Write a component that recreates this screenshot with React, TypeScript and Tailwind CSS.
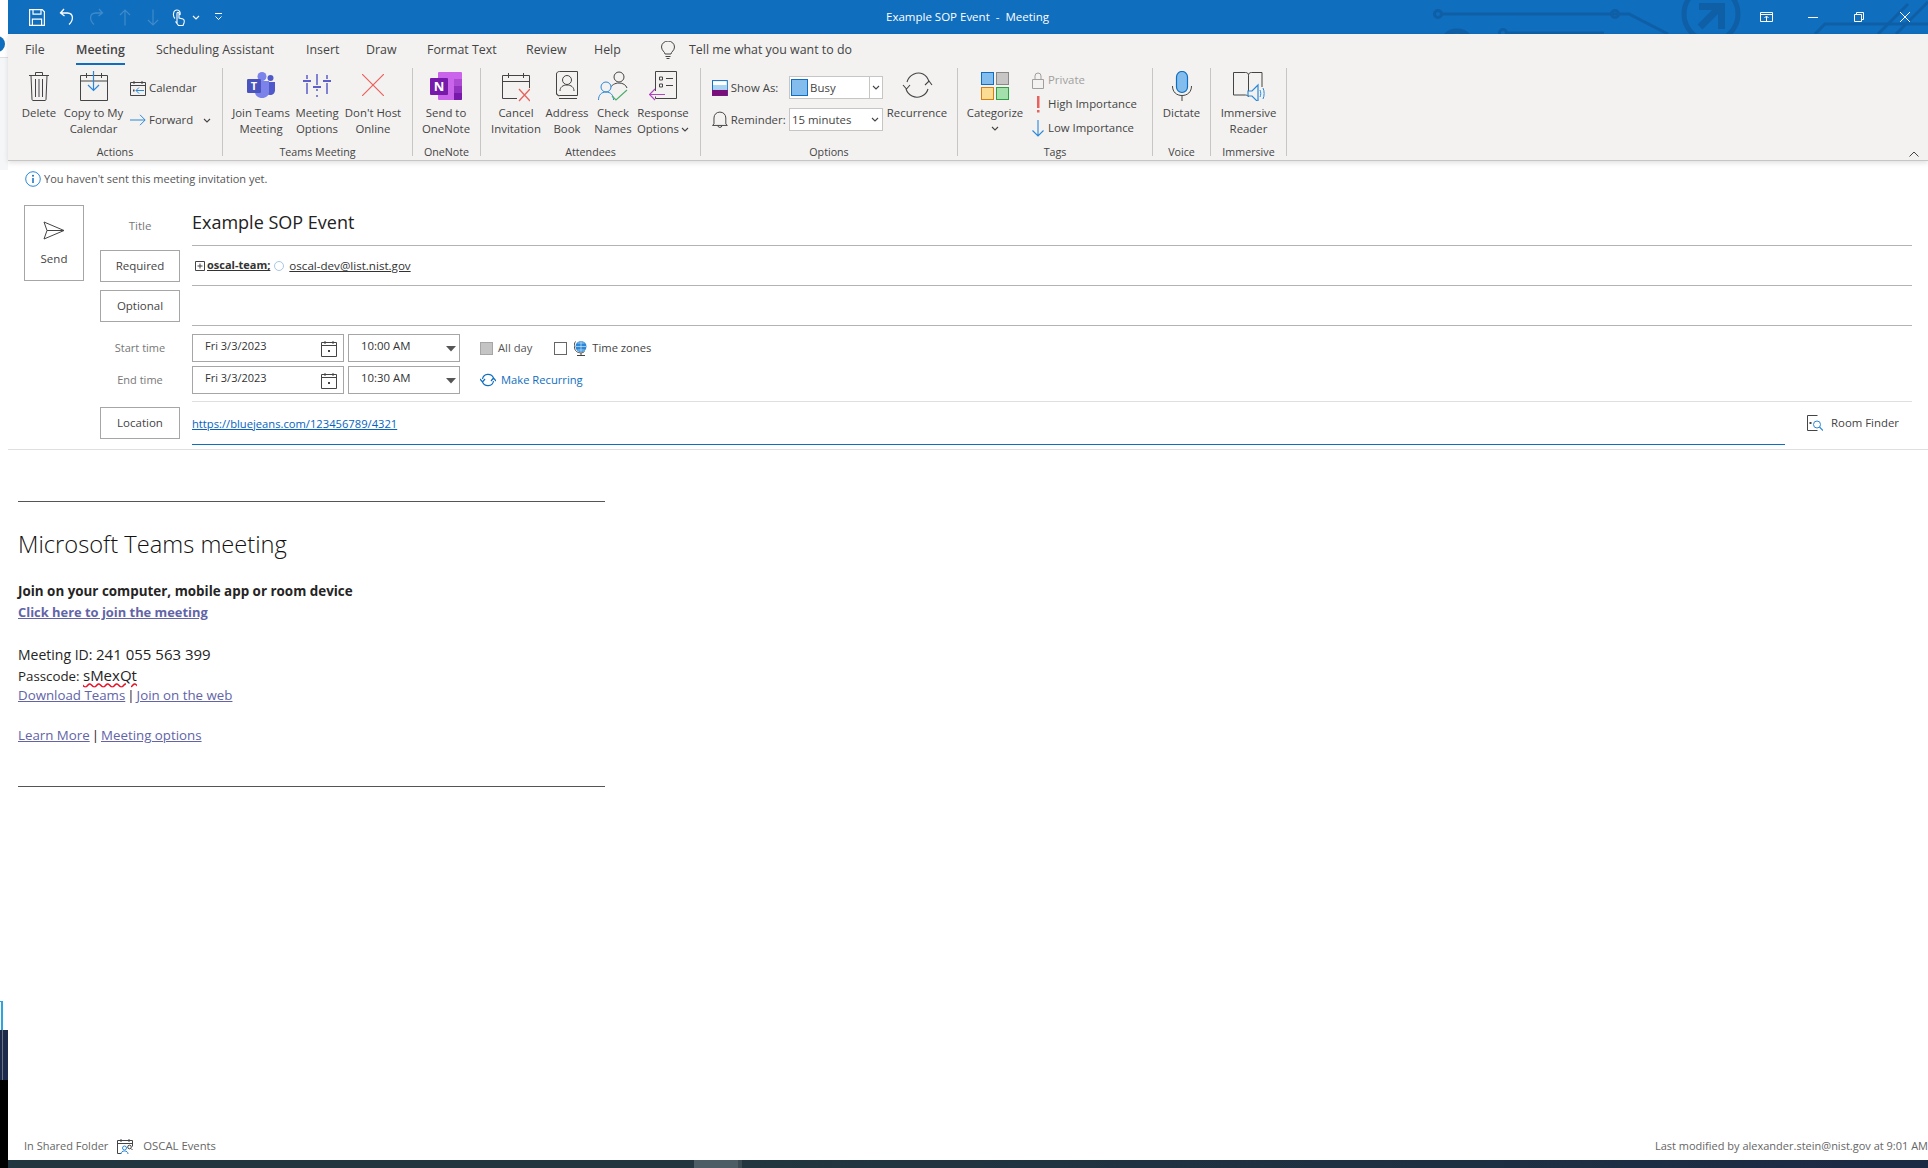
import type { ReactNode } from "react"

const ink = "#444444"

function Chevron({ className = "" }: { className?: string }) {
  return (
    <svg width="8" height="5" viewBox="0 0 8 5" className={className}>
      <path d="M1 1l3 3 3-3" fill="none" stroke={ink} strokeWidth="1.1" />
    </svg>
  )
}

function CircuitArt() {
  return (
    <svg width="500" height="34" viewBox="0 0 500 34" fill="none" stroke="#0f5fa6" className="absolute right-0 top-0">
      <path d="M14 14H201L240 34" strokeWidth="3" />
      <circle cx="10" cy="14" r="3.5" strokeWidth="3" />
      <circle cx="187" cy="14" r="3.5" strokeWidth="3" />
      <circle cx="29" cy="47" r="16" strokeWidth="5" />
      <path d="M79 33H176" strokeWidth="3" />
      <circle cx="75" cy="33" r="3.5" strokeWidth="3" />
      <circle cx="283" cy="14" r="27" strokeWidth="5" />
      <path d="M272 27L292 7" strokeWidth="7" />
      <path d="M271 3H297V29H290V10H271Z" fill="#0f5fa6" stroke="none" />
      <path d="M387 34L397 24H500" strokeWidth="3" />
      <path d="M450 34L480 4M468 34L500 2" strokeWidth="3" />
    </svg>
  )
}

function QuickAccess() {
  return (
    <div className="flex items-center pl-[21px]">
      <svg width="16" height="17" viewBox="0 0 16 17" fill="none" stroke="#fff" strokeWidth="1.2">
        <path d="M.6.6h12.6l2.2 2.2v13.6H.6zM4 .6v4.6h8V.6M3.4 16.4v-6.2h9.2v6.2" />
      </svg>
      <svg width="16" height="18" viewBox="0 0 16 18" fill="none" stroke="#fff" strokeWidth="1.3" className="ml-[14px]">
        <path d="M5 1L1.5 5 5.5 8M2 5h6.5c6 .5 6.5 6.500 1.500 11.500" />
      </svg>
      <svg width="16" height="18" viewBox="0 0 16 18" fill="none" stroke="#3f8acb" strokeWidth="1.3" className="ml-[13px]">
        <path d="M11 1l3.500 4L10.500 8M14 5H7.500C1.500 5.500 1 11.500 6 16.500" />
      </svg>
      <svg width="12" height="17" viewBox="0 0 12 17" fill="none" stroke="#3f8acb" strokeWidth="1.2" className="ml-[15px]">
        <path d="M6 16.500V1M1 6l5-5 5 5" />
      </svg>
      <svg width="12" height="17" viewBox="0 0 12 17" fill="none" stroke="#3f8acb" strokeWidth="1.2" className="ml-[16px]">
        <path d="M6 .5V16M1 11l5 5 5-5" />
      </svg>
      <svg width="13" height="17" viewBox="0 0 13 17" fill="none" stroke="#fff" strokeWidth="1.1" className="ml-[13px]">
        <path d="M3 9.500C.5 7 1 1 5 1c3 0 3.500 3 3 5M5 14.500V4.500c0-1.600 2-1.600 2 0v4.500l4 1c1.500.5 1.500 2 1 4l-1 2.500H6.500l-3-4" />
      </svg>
      <Chevron className="ml-[7px] [&_path]:stroke-white" />
      <svg width="9" height="8" viewBox="0 0 9 8" className="ml-[14px]">
        <path d="M1 .5h7" stroke="#fff" />
        <path d="M1.500 3.500l3 3 3-3" fill="none" stroke="#fff" />
      </svg>
    </div>
  )
}

function WindowButtons() {
  return (
    <div className="relative ml-auto flex items-center">
      <svg width="13" height="10" viewBox="0 0 13 10" fill="none" stroke="#fff" className="mr-[35px]">
        <path d="M.5.5h12v9H.5zM.5 2.500h12M6.500 9.500V4.500M4.500 6l2-2 2 2" />
      </svg>
      <span className="mr-[36px] h-px w-[10px] bg-white" />
      <svg width="10" height="10" viewBox="0 0 10 10" fill="none" stroke="#fff" className="mr-[36px]">
        <path d="M.5 2.500h7v7h-7zM2.500 2.500v-2h7v7h-2" />
      </svg>
      <svg width="10" height="10" viewBox="0 0 10 10" stroke="#fff" className="mr-[18px]">
        <path d="M0 0l10 10M10 0L0 10" />
      </svg>
    </div>
  )
}

const ICONS: Record<string, ReactNode> = {
  trash: (
    <svg width="22" height="30" viewBox="0 0 22 30" fill="none" stroke="#444" strokeWidth="1">
      <path d="M1 4.500h20M7.500 4V1.500h7V4M3 4.500l1 24c0 .6.500 1 1 1h12c.5 0 1-.4 1-1l1-24M7.500 8v18M11 8v18M14.500 8v18" />
    </svg>
  ),
  copyCal: (
    <svg width="28" height="30" viewBox="0 0 28 30" fill="none">
      <path d="M.5 4.500h27v25H.5zM.5 10h27M6.500 2v5M21.500 2v5" stroke="#444" />
      <path d="M13.500 0v19M8 14l5.500 5.500L19 14" stroke="#2b88d8" strokeWidth="1.200" />
    </svg>
  ),
  teams: (
    <svg width="28" height="26" viewBox="0 0 28 26" className="mt-px">
      <circle cx="15" cy="4.500" r="4.500" fill="#7b83eb" />
      <circle cx="23.500" cy="6" r="3" fill="#5059c9" />
      <path d="M19 10h9v8c0 3-2 5-5 5-2 0-3-1-4-2z" fill="#5059c9" />
      <path d="M8 9h14v11c0 3.500-3 6-7 6s-7-2.500-7-6z" fill="#7b83eb" />
      <rect x="0" y="7" width="14" height="14" rx="1.200" fill="#4b53bc" />
      <text x="7" y="18" textAnchor="middle" fontSize="11" fontWeight="700" fill="#fff" fontFamily="Open Sans">T</text>
    </svg>
  ),
  sliders: (
    <svg width="28" height="24" viewBox="0 0 28 24" fill="none" stroke="#5b5fc7" strokeWidth="1.500" className="mt-[2px]">
      <path d="M4 2v4M4 10v11M14 1v11M14 16v2M14 22v2M24 2v4M24 10v11" />
      <path d="M0 8h8M10 14h8M20 8h8" strokeWidth="2" />
    </svg>
  ),
  redX: (
    <svg width="22" height="22" viewBox="0 0 22 22" stroke="#e8625d" strokeWidth="1.200" className="mt-[3px]">
      <path d="M0 0l22 22M22 0L0 22" />
    </svg>
  ),
  oneNote: (
    <svg width="32" height="28" viewBox="0 0 32 28" className="mt-px">
      <rect x="8" y="0" width="24" height="28" rx="1" fill="#ca64ea" />
      <rect x="24" y="7" width="8" height="7" fill="#ae4bd5" />
      <rect x="24" y="14" width="8" height="7" fill="#9332bf" />
      <path d="M24 21h8v6a1 1 0 0 1-1 1h-7z" fill="#7719aa" />
      <rect x="0" y="6" width="18" height="17" rx="1" fill="#7719aa" />
      <text x="9" y="19" textAnchor="middle" fontSize="13" fontWeight="700" fill="#fff" fontFamily="Open Sans">N</text>
    </svg>
  ),
  cancelCal: (
    <svg width="28" height="30" viewBox="0 0 28 30" fill="none" className="mt-px">
      <path d="M.5 3.500h27v23H.5zM.5 9.500h27M6.500 1v5M21.500 1v5" stroke="#444" />
      <path d="M15 16h13v14H15z" fill="#f3f2f1" />
      <path d="M17 17l11 12M28 17L17 29" stroke="#e8625d" strokeWidth="1.300" />
    </svg>
  ),
  book: (
    <svg width="22" height="28" viewBox="0 0 22 28" fill="none" stroke="#444">
      <path d="M3.500.5h18v24h-18c-1.600 0-3-.9-3-2.500v-19c0-1.500 1.400-2.500 3-2.500zM.5 22c0 2 1.400 2.800 3 2.800M3 27.500h18" />
      <circle cx="11" cy="9" r="4.500" />
      <path d="M4 20c0-4 3-6 7-6s7 2 7 6" />
    </svg>
  ),
  check: (
    <svg width="30" height="30" viewBox="0 0 30 30" fill="none">
      <circle cx="21" cy="6" r="5" stroke="#444" />
      <path d="M12 18c1-4 5-6 9-6s7 2 8 5" stroke="#444" />
      <circle cx="8" cy="16" r="5" fill="#f3f2f1" stroke="#2b88d8" />
      <path d="M0.500 29c0-5 3-8 7.500-8s7.500 3 7.500 8" stroke="#2b88d8" />
      <path d="M14 25l4 4 11-10" stroke="#4caf6a" strokeWidth="1.200" />
    </svg>
  ),
  response: (
    <svg width="28" height="30" viewBox="0 0 28 30" fill="none">
      <path d="M6.500 20V.5h21v27h-21v-2" stroke="#444" />
      <path d="M10.500 6h3v3h-3zM10.500 13h3v3h-3zM17 7.500h7M17 14.500h7" stroke="#444" />
      <path d="M0 23.500h16M6 18l-5.500 5.500L6 29" stroke="#b146c2" strokeWidth="1.200" />
    </svg>
  ),
  recurrence: (
    <svg width="31" height="28" viewBox="0 0 31 28" fill="none" stroke="#444" strokeWidth="1.100">
      <path d="M5 11C7 4 15 0 21 3c3 1.500 5 4 6 8M26 18c-2 7-10 10-16 7-3-1.500-5-4-6-7" />
      <path d="M1 14l3.500 4 3.500-4M23 14l4-4 3 4" />
    </svg>
  ),
  cats: (
    <svg width="28" height="28" viewBox="0 0 28 28" className="mt-px">
      <rect x=".5" y=".5" width="12" height="12" fill="#83bdee" stroke="#106ebe" />
      <rect x="15.500" y=".5" width="12" height="12" fill="#c8c6c4" stroke="#8a8886" />
      <rect x=".5" y="15.500" width="12" height="12" fill="#fbdc93" stroke="#d67f0e" />
      <rect x="15.500" y="15.500" width="12" height="12" fill="#a4e0ac" stroke="#2f9e44" />
    </svg>
  ),
  mic: (
    <svg width="20" height="30" viewBox="0 0 20 30" fill="none">
      <rect x="4.500" y=".5" width="11" height="21" rx="5.500" fill="#83bdee" stroke="#106ebe" strokeWidth="1.200" />
      <path d="M.5 15c0 6 4 9.500 9.500 9.500S19.500 21 19.500 15" stroke="#444" />
      <path d="M10 24.500V30" stroke="#444" />
    </svg>
  ),
  reader: (
    <svg width="32" height="30" viewBox="0 0 32 30" fill="none">
      <path d="M.5 1.500h12c2 0 3 1 3 3v21c-1-1-2-1.500-3-1.500H.5zM15.500 4.500c0-2 1-3 3-3H29V16" stroke="#444" />
      <path d="M15 20h4l6-6v17l-6-6h-4z" fill="#f3f2f1" stroke="#2b88d8" strokeWidth="1.200" />
      <path d="M27 19c1 2 1 5 0 7M30 17c1.500 3 1.500 8 0 11" stroke="#2b88d8" />
    </svg>
  ),
}

function LargeButton({ icon, className, children }: { icon: string; className: string; children: ReactNode }) {
  return (
    <div className={`flex shrink-0 flex-col items-center text-center leading-[16px] ${className}`}>
      <div className="flex h-[37px] items-start justify-center pt-[3px]">{ICONS[icon]}</div>
      {children}
    </div>
  )
}

function Group({
  label,
  className,
  rowClassName = "",
  children,
}: {
  label: string
  className: string
  rowClassName?: string
  children: ReactNode
}) {
  return (
    <div className={`flex h-[88px] shrink-0 flex-col border-r border-[#c8c6c4] ${className}`}>
      <div className={`flex h-[76px] shrink-0 ${rowClassName}`}>{children}</div>
      <div className="text-center text-[10.700px] leading-[16px]">{label}</div>
    </div>
  )
}

function Ribbon() {
  return (
    <div className="relative h-[127px] shrink-0 border-b border-[#c8c6c4] bg-[#f3f2f1] text-[11.400px] text-[#444444] shadow-[0_2px_5px_rgba(0,0,0,0.12)]">
      <div className="mb-[2px] flex h-[32px] items-center pl-[17px] text-[12.400px]">
        <span className="w-[51px]">File</span>
        <span className="w-[80px]">
          <span className="relative font-semibold">
            Meeting
            <span className="absolute -bottom-[7px] left-0 h-[2px] w-full bg-[#106ebe]" />
          </span>
        </span>
        <span className="w-[150px]">Scheduling Assistant</span>
        <span className="w-[60px]">Insert</span>
        <span className="w-[61px]">Draw</span>
        <span className="w-[99px]">Format Text</span>
        <span className="w-[68px]">Review</span>
        <span className="w-[67px]">Help</span>
        <span className="flex items-center gap-[14px]">
          <svg width="14" height="18" viewBox="0 0 14 18" fill="none" stroke="#444">
            <path d="M4 13c0-2-3.500-3.500-3.500-7a6.500 6 0 0 1 13 0c0 3.500-3.500 5-3.500 7zM4.500 15.500h5M5.500 17.500h3" />
          </svg>
          Tell me what you want to do
        </span>
      </div>
      <div className="flex">
        <Group label="Actions" className="w-[215px]" rowClassName="pl-[11px]">
          <LargeButton icon="trash" className="w-[40px]">Delete</LargeButton>
          <LargeButton icon="copyCal" className="w-[69px]">
            <span>Copy to My</span>
            <span>Calendar</span>
          </LargeButton>
          <div className="ml-[2px] flex flex-col pt-[9px]">
            <div className="flex h-[22px] items-center gap-[3px]">
              <svg width="16" height="16" viewBox="0 0 16 16" fill="none">
                <path d="M.5 2.500h15v13H.5zM.5 5.500h15M4 1v3M12 1v3" stroke="#444" />
                <path d="M14 10.500H6M9 7.500l-3 3 3 3" stroke="#2b88d8" />
                <path d="M3 9.500h1.500v2H3z" fill="#444" />
              </svg>
              Calendar
            </div>
            <div className="mt-[10px] flex h-[22px] items-center gap-[3px]">
              <svg width="16" height="12" viewBox="0 0 16 12" fill="none" stroke="#2b88d8">
                <path d="M0 6h15M10 .8L15.200 6 10 11.200" />
              </svg>
              Forward
              <Chevron className="ml-[7px]" />
            </div>
          </div>
        </Group>
        <Group label="Teams Meeting" className="w-[190px]" rowClassName="pl-[4px]">
          <LargeButton icon="teams" className="w-[68px]">
            <span>Join Teams</span>
            <span>Meeting</span>
          </LargeButton>
          <LargeButton icon="sliders" className="w-[44px]">
            <span>Meeting</span>
            <span>Options</span>
          </LargeButton>
          <LargeButton icon="redX" className="w-[68px]">
            <span>Don't Host</span>
            <span>Online</span>
          </LargeButton>
        </Group>
        <Group label="OneNote" className="w-[68px]">
          <LargeButton icon="oneNote" className="w-[66px]">
            <span>Send to</span>
            <span>OneNote</span>
          </LargeButton>
        </Group>
        <Group label="Attendees" className="w-[220px]" rowClassName="pl-[7px]">
          <LargeButton icon="cancelCal" className="w-[56px]">
            <span>Cancel</span>
            <span>Invitation</span>
          </LargeButton>
          <LargeButton icon="book" className="w-[46px]">
            <span>Address</span>
            <span>Book</span>
          </LargeButton>
          <LargeButton icon="check" className="w-[46px]">
            <span>Check</span>
            <span>Names</span>
          </LargeButton>
          <LargeButton icon="response" className="w-[54px]">
            <span>Response</span>
            <span className="flex items-center gap-[2px]">Options <Chevron /></span>
          </LargeButton>
        </Group>
        <Group label="Options" className="w-[257px]" rowClassName="pl-[11px]">
          <div className="flex w-[171px] shrink-0 flex-col gap-[9px] pt-[8px]">
            <div className="flex h-[23px] items-center">
              <svg width="16" height="16" viewBox="0 0 16 16">
                <rect x=".5" y=".5" width="15" height="15" fill="#fff" stroke="#106ebe" />
                <rect x="1" y="5" width="14" height="5" fill="#a9d3f2" />
                <rect y="10" width="16" height="6" fill="#7a0f7a" />
              </svg>
              <span className="ml-[3px] w-[59px]">Show As:</span>
              <div className="flex h-[23px] w-[95px] items-center border border-[#c8c6c4] bg-white pl-[1px]">
                <span className="h-[17px] w-[17px] border border-[#106ebe] bg-[#83bdee]" />
                <span className="ml-[2px] flex-1">Busy</span>
                <span className="flex h-full w-[13px] items-center justify-center border-l border-[#c8c6c4]"><Chevron /></span>
              </div>
            </div>
            <div className="flex h-[23px] items-center">
              <svg width="16" height="17" viewBox="0 0 16 17" fill="none" stroke="#444">
                <path d="M2 13V7c0-3.500 2.500-6 6-6s6 2.500 6 6v6l1.500 1.500H.5zM6 15c0 2 4 2 4 0" />
              </svg>
              <span className="ml-[3px] w-[59px]">Reminder:</span>
              <div className="flex h-[23px] w-[95px] items-center justify-between border border-[#c8c6c4] bg-white pl-[2px] pr-[3px]">
                15 minutes
                <Chevron />
              </div>
            </div>
          </div>
          <LargeButton icon="recurrence" className="w-[68px]">Recurrence</LargeButton>
        </Group>
        <Group label="Tags" className="w-[195px]" rowClassName="pl-[7px]">
          <LargeButton icon="cats" className="w-[60px]">
            <span>Categorize</span>
            <Chevron className="mt-[5px]" />
          </LargeButton>
          <div className="ml-[5px] flex flex-col">
            <div className="flex h-[24px] items-center gap-[2px] text-[#a19f9d]">
              <svg width="16" height="17" viewBox="0 0 12 17" fill="none" stroke="#a19f9d">
                <path d="M.5 7.500h11v9H.5zM3 7.500V4a3 3 0 0 1 6 0v3.500" />
              </svg>
              Private
            </div>
            <div className="flex h-[24px] items-center gap-[2px]">
              <svg width="16" height="17" viewBox="0 0 16 17">
                <rect x="7" y="0" width="2.500" height="12" fill="#e8625d" />
                <rect x="7" y="14" width="2.500" height="2.500" fill="#e8625d" />
              </svg>
              High Importance
            </div>
            <div className="flex h-[24px] items-center gap-[2px]">
              <svg width="16" height="17" viewBox="0 0 16 17" fill="none" stroke="#2b88d8" strokeWidth="1.100">
                <path d="M8 0v16M2.500 10.500L8 16l5.500-5.500" />
              </svg>
              Low Importance
            </div>
          </div>
        </Group>
        <Group label="Voice" className="w-[58px]">
          <LargeButton icon="mic" className="w-[57px]">Dictate</LargeButton>
        </Group>
        <Group label="Immersive" className="w-[76px]">
          <LargeButton icon="reader" className="w-[75px]">
            <span>Immersive</span>
            <span>Reader</span>
          </LargeButton>
        </Group>
      </div>
      <svg width="10" height="6" viewBox="0 0 10 6" fill="none" stroke="#444" className="absolute bottom-[3px] right-[9px]">
        <path d="M.5 5.500L5 1l4.500 4.500" />
      </svg>
    </div>
  )
}

function BoxButton({ children }: { children: ReactNode }) {
  return (
    <div className="flex h-[32px] w-[80px] shrink-0 items-center justify-center border border-[#a6a6a6] text-[11.500px] text-[#444444]">
      {children}
    </div>
  )
}

function DateRow({ label, time, children }: { label: string; time: string; children: ReactNode }) {
  return (
    <div className="flex h-[28px] items-center text-[11.200px]">
      <div className="w-[80px] text-center text-[11px] text-[#777777]">{label}</div>
      <div className="ml-[12px] flex h-[28px] w-[152px] items-start border border-[#a6a6a6] pl-[12px] pt-[3px] text-[11px] text-[#333333]">
        Fri 3/3/2023
        <svg width="16" height="16" viewBox="0 0 16 16" fill="none" stroke="#444" className="ml-auto mr-[6px] mt-[3px]">
          <path d="M.5 1.500h15v14H.5zM.5 4.500h15M4 0v3M12 0v3" />
          <rect x="7" y="9" width="2" height="2" fill="#444" stroke="none" />
        </svg>
      </div>
      <div className="ml-[4px] flex h-[28px] w-[112px] items-start border border-[#a6a6a6] pl-[12px] pt-[2px] text-[11.400px] text-[#333333]">
        {time}
        <svg width="10" height="6" viewBox="0 0 10 6" className="ml-auto mr-[3px] mt-[9px]">
          <path d="M0 0h10L5 5.500z" fill="#555" />
        </svg>
      </div>
      {children}
    </div>
  )
}

function MeetingForm() {
  return (
    <div className="shrink-0 border-b border-[#e1dfdd]">
      <div className="flex h-[44px] items-start pl-[17px] pt-[10px] text-[11px] text-[#555555]">
        <svg width="16" height="16" viewBox="0 0 16 16" fill="none">
          <circle cx="8" cy="8" r="7.300" stroke="#2b88d8" />
          <path d="M8 7v5" stroke="#106ebe" strokeWidth="1.500" />
          <circle cx="8" cy="4.700" r="1" fill="#106ebe" />
        </svg>
        <span className="ml-[3px]">You haven't sent this meeting invitation yet.</span>
      </div>
      <div className="flex pb-[4px] pl-[16px]">
        <div className="flex h-[76px] w-[60px] shrink-0 flex-col items-center border border-[#a6a6a6] pt-[15px] text-[11.500px] text-[#444444]">
          <svg width="22" height="19" viewBox="0 0 22 19" fill="none" stroke="#444">
            <path d="M1 1l20 8.500L1 18l3-8.500zM4 9.500h17" />
          </svg>
          <span className="mt-[10px]">Send</span>
        </div>
        <div className="ml-[16px] flex flex-col">
          <div className="flex h-[41px] items-center">
            <div className="w-[80px] text-center text-[11.500px] text-[#777777]">Title</div>
            <div className="ml-[12px] flex h-full w-[1720px] items-center border-b border-[#b3b3b3] pb-[6px] text-[18px] text-[#222222]">
              Example SOP Event
            </div>
          </div>
          <div className="flex h-[40px] items-center">
            <BoxButton>Required</BoxButton>
            <div className="ml-[12px] flex h-full w-[1720px] items-center border-b border-[#b3b3b3] pl-[3px] text-[11.600px] text-[#333333]">
              <svg width="10" height="10" viewBox="0 0 10 10" fill="none" stroke="#444">
                <path d="M.5.5h9v9h-9zM5 2.500v5M2.500 5h5" />
              </svg>
              <span className="ml-[2px] text-[11px] font-bold underline">oscal-team;</span>
              <span className="ml-[4px] h-[10px] w-[10px] rounded-full border border-[#a9c7e2]" />
              <span className="ml-[5px] underline">oscal-dev@list.nist.gov</span>
            </div>
          </div>
          <div className="flex h-[40px] items-center">
            <BoxButton>Optional</BoxButton>
            <div className="ml-[12px] h-full w-[1720px] border-b border-[#b3b3b3]" />
          </div>
          <div className="mt-[8px] flex flex-col gap-[4px]">
            <DateRow label="Start time" time="10:00 AM">
              <span className="ml-[20px] h-[13px] w-[13px] border border-[#a6a6a6] bg-[#c4c4c4]" />
              <span className="ml-[5px] text-[#555555]">All day</span>
              <span className="ml-[22px] h-[13px] w-[13px] border border-[#666666]" />
              <svg width="13" height="16" viewBox="0 0 13 16" className="ml-[7px]">
                <circle cx="7" cy="6.500" r="5.500" fill="#2b88d8" />
                <path d="M2 6.500h10M7 1v11M3.500 3h7M3.500 10h7" stroke="#cfe6f8" strokeWidth=".7" />
                <path d="M1.500 1.500c-2 3-1.500 8 1 10 2 1.500 6 2 8 0M3 15.500h8M7 13v2.500" stroke="#444" fill="none" />
              </svg>
              <span className="ml-[5px] text-[#444444]">Time zones</span>
            </DateRow>
            <DateRow label="End time" time="10:30 AM">
              <svg width="16" height="14" viewBox="0 0 16 14" fill="none" stroke="#106ebe" strokeWidth="1.200" className="ml-[20px]">
                <path d="M2.500 6c1-6 9-6 11-1M13.500 8c-1 6-9 6-11 1M0 6l2.500 3L5 6M11 8l2.500-3L16 8" />
              </svg>
              <span className="ml-[5px] text-[#106ebe]">Make Recurring</span>
            </DateRow>
          </div>
          <div className="ml-[92px] mt-[7px] w-[1720px] border-t border-[#e1dfdd]" />
          <div className="flex h-[43px] items-start">
            <div className="mt-[5px]">
              <BoxButton>Location</BoxButton>
            </div>
            <div className="ml-[12px] flex h-full w-[1593px] items-center border-b border-[#106ebe] pt-[3px] text-[11.200px] text-[#0563c1]">
              <span className="underline">https://bluejeans.com/123456789/4321</span>
            </div>
            <div className="ml-[22px] mt-[12px] flex items-center gap-[8px] text-[11.400px] text-[#444444]">
              <svg width="16" height="16" viewBox="0 0 16 16" fill="none">
                <path d="M10.500.5H.5v15h10" stroke="#444" />
                <rect x="2.500" y="7" width="2" height="2" fill="#444" />
                <circle cx="10" cy="9.500" r="3.500" stroke="#2b88d8" />
                <path d="M12.500 12l3.500 3.500" stroke="#2b88d8" strokeWidth="1.200" />
              </svg>
              Room Finder
            </div>
          </div>
        </div>
      </div>
    </div>
  )
}

function TeamsBody() {
  const link = "text-[#6264a7] underline"
  return (
    <div className="flex-1 pl-[10px] text-[13.300px] leading-[20px] text-[#252424]">
      <div className="mt-[51px] w-[587px] border-t border-[#555555]" />
      <div className="mt-[26px] text-[23.700px] font-light leading-[32px] text-[#111111]">Microsoft Teams meeting</div>
      <div className="mt-[21px] text-[13.400px] font-bold leading-[21px]">Join on your computer, mobile app or room device</div>
      <div className="text-[12.900px] font-bold leading-[21px] text-[#6264a7] underline">Click here to join the meeting</div>
      <div className="mt-[21px] text-[14px] leading-[21px]">Meeting ID: <span className="text-[15px]">241 055 563 399</span></div>
      <div className="leading-[20px]">
        Passcode: <span className="text-[15px] underline decoration-[#e81123] decoration-wavy">sMexQt</span>
      </div>
      <div className="flex leading-[19px]">
        <span className={link}>Download Teams</span>
        <span className="mx-[2px]">|</span>
        <span className={link}>Join on the web</span>
      </div>
      <div className="mt-[20px] flex leading-[20px]">
        <span className={link}>Learn More</span>
        <span className="mx-[2px]">|</span>
        <span className={link}>Meeting options</span>
      </div>
      <div className="mt-[41px] w-[587px] border-t border-[#555555]" />
    </div>
  )
}

function LeftStrip() {
  return (
    <div className="flex w-2 shrink-0 flex-col overflow-hidden">
      <div className="h-[36px]" />
      <div className="-ml-[11px] h-4 w-4 shrink-0 rounded-full bg-[#106ebe]" />
      <div className="h-[5px]" />
      <div className="h-[113px] border-t border-[#e1dfdd] bg-[#f5f6f7]" />
      <div className="flex-1" />
      <div className="h-[29px] w-[3px] border-r-2 border-t border-[#2aa5e0]" />
      <div className="h-[50px] bg-[#1b2a4a]">
        <div className="ml-[2px] h-full w-px bg-[#6b7280]" />
      </div>
      <div className="h-[88px] bg-black" />
    </div>
  )
}

export default function App() {
  return (
    <div className="flex h-[1168px] w-[1928px] overflow-hidden bg-white font-['Open_Sans','Noto_Sans',sans-serif]">
      <LeftStrip />
      <div className="flex min-w-0 flex-1 flex-col">
        <div className="relative flex h-[34px] shrink-0 items-center bg-[#106ebe]">
          <CircuitArt />
          <QuickAccess />
          <div className="absolute inset-x-0 top-[8px] pl-[878px] text-[11.500px] leading-[18px] text-white">Example SOP Event&nbsp; -&nbsp; Meeting</div>
          <WindowButtons />
        </div>
        <Ribbon />
        <MeetingForm />
        <TeamsBody />
        <div className="flex h-[25px] shrink-0 items-start justify-between pl-[16px] text-[11px] leading-[22px] text-[#666666]">
          <div className="flex items-center">
            In Shared Folder
            <svg width="16" height="16" viewBox="0 0 16 16" fill="none" className="ml-[9px]">
              <path d="M4 15.500H.5v-13h15v6M.5 5.500h15M4 1v3M12 1v3" stroke="#444" />
              <circle cx="7.500" cy="10" r="2" stroke="#2b88d8" />
              <path d="M4 16c0-2 1.500-3 3.500-3s3.500 1 3.500 3" stroke="#2b88d8" />
              <circle cx="12.500" cy="9" r="1.800" stroke="#444" />
              <path d="M14 10.500l1.500 1.500" stroke="#444" />
            </svg>
            <span className="ml-[10px] text-[11.300px]">OSCAL Events</span>
          </div>
          <span>Last modified by alexander.stein@nist.gov at 9:01 AM</span>
        </div>
        <div className="flex h-2 shrink-0 overflow-hidden">
          <div className="w-[686px] bg-[#22363f]" />
          <div className="w-[44px] bg-[#4c5d66]" />
          <div className="w-[4px] bg-[#3c4a52]" />
          <div className="flex-1 bg-gradient-to-r from-[#22363f] to-[#1c2a44] pl-[1141px] pt-[5px] text-[11px] leading-[14px] text-white">9:01 AM</div>
        </div>
      </div>
    </div>
  )
}
